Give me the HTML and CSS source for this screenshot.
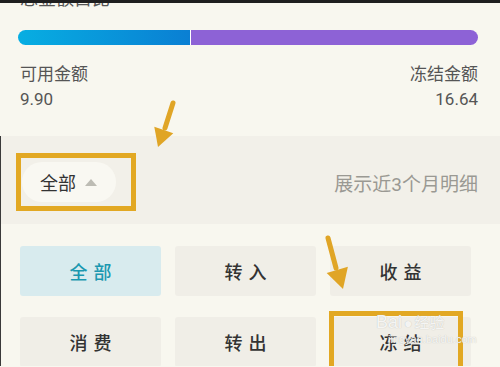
FILE: index.html
```html
<!DOCTYPE html>
<html lang="zh-CN">
<head>
<meta charset="utf-8">
<title>余额明细</title>
<link rel="stylesheet" href="styles.css">
</head>
<body>
<div class="strip"></div>
<section class="summary">
  <div class="title">总金额占比</div>
  <div class="bar">
    <div class="seg blue" style="width:37.4%"></div>
    <div class="seg purple"></div>
  </div>
  <div class="amounts">
    <div class="col">
      <div class="lbl">可用金额</div>
      <div class="num">9.90</div>
    </div>
    <div class="col right">
      <div class="lbl">冻结金额</div>
      <div class="num">16.64</div>
    </div>
  </div>
</section>
<section class="filter">
  <div class="hl">
    <div class="pill">全部<span class="tri"></span></div>
  </div>
  <div class="hint">展示近3个月明细</div>
</section>
<section class="types">
  <div class="btn active">全部</div>
  <div class="btn">转入</div>
  <div class="btn">收益</div>
  <div class="btn">消费</div>
  <div class="btn">转出</div>
  <div class="btn marked">冻结<div class="hl2"></div>
    <div class="mark"><span class="bai">Bai</span><span class="paw">●</span><span class="jy">经验</span><div class="url">jingyan.baidu.com</div></div>
  </div>
</section>
<svg class="arrows" width="500" height="367" viewBox="0 0 500 367">
  <line x1="173" y1="103" x2="165" y2="128" stroke="#e0a526" stroke-width="5" stroke-linecap="round"/>
  <polygon points="158,147 173.3,133.2 154.3,126.8" fill="#e0a526"/>
  <line x1="328" y1="238" x2="336" y2="268" stroke="#e0a526" stroke-width="5" stroke-linecap="round"/>
  <polygon points="343,289 347.9,266.7 326.7,272.9" fill="#e0a526"/>
</svg>
</body>
</html>
```
FILE: styles.css
```css
html, body {
  margin: 0;
  padding: 0;
  overflow: hidden;
}
body {
  width: 500px;
  height: 367px;
  position: relative;
  background: #f8f7ef;
  font-family: Roboto, "Noto Sans CJK SC", sans-serif;
  color: #555;
}
.strip {
  position: absolute;
  left: 0;
  top: 0;
  width: 500px;
  height: 3px;
  background: #1f1f1f;
  z-index: 5;
}
.summary {
  padding: 0 22px 24px 18px;
}
.title {
  margin-top: -13px;
  padding-left: 2px;
  font-size: 18px;
  line-height: 24px;
  color: #555;
}
.bar {
  margin-top: 19px;
  height: 15px;
  border-radius: 8px;
  overflow: hidden;
  display: flex;
  background: #fff;
}
.seg {
  height: 100%;
}
.blue {
  background: linear-gradient(90deg, #07aee2, #0a7fd3);
  margin-right: 1px;
}
.purple {
  flex: 1;
  background: #8d62d6;
}
.amounts {
  margin-top: 17px;
  display: flex;
  justify-content: space-between;
  padding-left: 2px;
}
.lbl, .num {
  font-size: 17px;
  line-height: 25px;
  color: #555;
}
.right {
  text-align: right;
}
.filter {
  background: #f2f0e9;
  padding: 17px 22px 13px 16px;
  display: flex;
  align-items: center;
  justify-content: space-between;
  box-shadow: inset 1px 0 #3a3a3a;
}
.hl {
  width: 120px;
  box-sizing: border-box;
  border: 5px solid #e2a823;
  padding: 4px 0 4px 1px;
}
.pill {
  width: 94px;
  height: 40px;
  box-sizing: border-box;
  border-radius: 20px;
  background: #f9f8f2;
  padding-left: 18px;
  display: flex;
  align-items: center;
  font-size: 18px;
  color: #333;
}
.tri {
  margin-left: 9px;
  width: 0;
  height: 0;
  border-left: 6px solid transparent;
  border-right: 6px solid transparent;
  border-bottom: 7px solid #bdbcb4;
}
.hint {
  font-size: 19px;
  color: #9a9993;
}
.types {
  padding: 22px 28px 0 20px;
  display: grid;
  grid-template-columns: repeat(3, 141px);
  grid-auto-rows: 50px;
  column-gap: 14px;
  row-gap: 21px;
  box-shadow: inset 1px 0 #3a3a3a;
  box-sizing: border-box;
  height: 142px;
  overflow: hidden;
}
.btn {
  position: relative;
  background: #f0eee7;
  border-radius: 3px;
  display: flex;
  align-items: center;
  justify-content: center;
  font-size: 18px;
  font-weight: 500;
  letter-spacing: 6px;
  padding-left: 6px;
  color: #333;
}
.btn.active {
  background: #d8ebee;
  color: #1b98b0;
}
.hl2 {
  position: absolute;
  left: -1px;
  top: -6px;
  width: 134px;
  height: 70px;
  box-sizing: border-box;
  border: 5px solid #e2a823;
}
.mark {
  position: absolute;
  left: 46px;
  top: -6px;
  letter-spacing: 0;
  font-weight: 400;
  color: rgba(255, 255, 255, 0.85);
  text-shadow: 0 0 1px #b8b8b0;
  white-space: nowrap;
  font-family: "Liberation Sans", "Noto Sans CJK SC", sans-serif;
}
.bai {
  font-size: 18px;
}
.paw {
  font-size: 14px;
  margin: 0 2px;
}
.jy {
  font-size: 15px;
  font-family: "Noto Sans CJK SC", sans-serif;
}
.url {
  font-size: 11px;
  line-height: 12px;
  margin-left: 12px;
}
.arrows {
  position: absolute;
  left: 0;
  top: 0;
  pointer-events: none;
  z-index: 4;
}
```
